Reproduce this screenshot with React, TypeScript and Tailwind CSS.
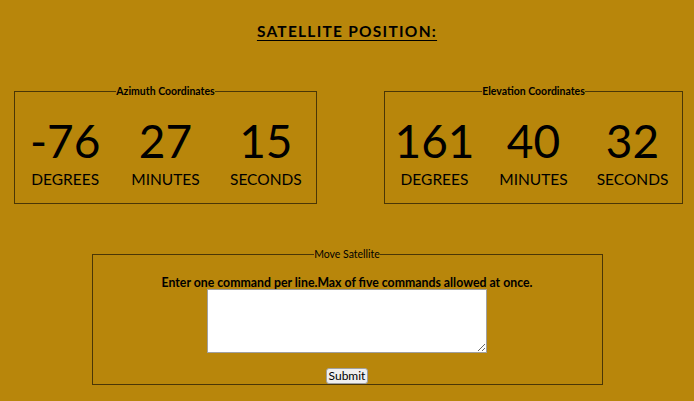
import React from "react";

const font = { fontFamily: 'Lato, "Open Sans", sans-serif' };

function Unit({ value, label }: { value: string; label: string }) {
  return (
    <div className="flex min-w-0 flex-1 flex-col items-center">
      <div className="text-[46px] leading-[56px] text-black">{value}</div>
      <div className="text-[15.5px] leading-[20px] text-black">{label}</div>
    </div>
  );
}

function Coords({ title, values, w }: { title: string; values: string[]; w: string }) {
  return (
    <fieldset className={`${w} min-w-0 border border-[#4a3606] px-0 pb-[14px]`}>
      <legend className="mx-auto px-0 text-[10.5px] font-bold leading-[12px]">{title}</legend>
      <div className="mt-[16px] flex">
        <Unit value={values[0]} label="DEGREES" />
        <Unit value={values[1]} label="MINUTES" />
        <Unit value={values[2]} label="SECONDS" />
      </div>
    </fieldset>
  );
}

export default function App() {
  return (
    <div className="min-h-[401px] w-full bg-[#b8860b] text-black" style={font}>
      <h1 className="pt-[21px] text-center text-[15.5px] font-bold leading-[20px] tracking-[1.25px] underline underline-offset-[3px]">
        SATELLITE POSITION:
      </h1>
      <div className="mt-[44px] flex justify-between pl-[14px] pr-[11px]">
        <Coords title="Azimuth Coordinates" values={["-76", "27", "15"]} w="w-[303px]" />
        <Coords title="Elevation Coordinates" values={["161", "40", "32"]} w="w-[299px]" />
      </div>
      <fieldset className="mx-auto mt-[44px] w-[511px] min-w-0 border border-[#4a3606] text-center">
        <legend className="mx-auto px-0 text-[10.5px] leading-[12px]">Move Satellite</legend>
        <p className="mt-[15px] text-[12.3px] font-bold leading-[16px]">
          Enter one command per line.Max of five commands allowed at once.
        </p>
        <textarea className="mt-[-2px] block mx-auto h-[64px] w-[280px] resize border border-[#a0a0a0] bg-white" />
        <div className="mt-[15px]">
          <button className="block mx-auto rounded-[3px] border border-[#a0a0a0] bg-[#efefef] px-[2px] text-[12px] leading-[14px]">
            Submit
          </button>
        </div>
      </fieldset>
    </div>
  );
}
